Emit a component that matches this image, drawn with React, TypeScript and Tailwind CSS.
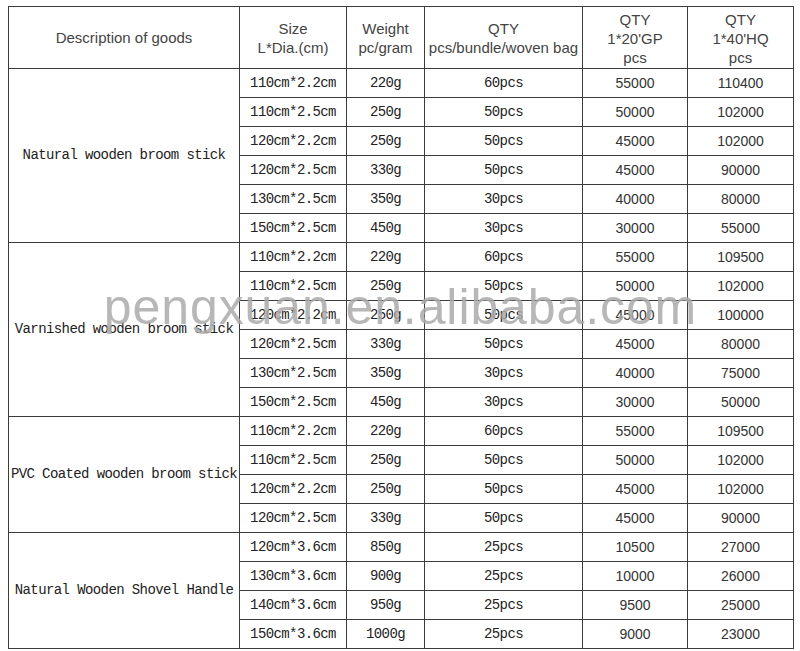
import React from 'react';

type Row = [string, string, string, string, string];

const groups: { name: string; rows: Row[] }[] = [
  {
    name: 'Natural wooden broom stick',
    rows: [
      ['110cm*2.2cm', '220g', '60pcs', '55000', '110400'],
      ['110cm*2.5cm', '250g', '50pcs', '50000', '102000'],
      ['120cm*2.2cm', '250g', '50pcs', '45000', '102000'],
      ['120cm*2.5cm', '330g', '50pcs', '45000', '90000'],
      ['130cm*2.5cm', '350g', '30pcs', '40000', '80000'],
      ['150cm*2.5cm', '450g', '30pcs', '30000', '55000'],
    ],
  },
  {
    name: 'Varnished wooden broom stick',
    rows: [
      ['110cm*2.2cm', '220g', '60pcs', '55000', '109500'],
      ['110cm*2.5cm', '250g', '50pcs', '50000', '102000'],
      ['120cm*2.2cm', '250g', '50pcs', '45000', '100000'],
      ['120cm*2.5cm', '330g', '50pcs', '45000', '80000'],
      ['130cm*2.5cm', '350g', '30pcs', '40000', '75000'],
      ['150cm*2.5cm', '450g', '30pcs', '30000', '50000'],
    ],
  },
  {
    name: 'PVC Coated wooden broom stick',
    rows: [
      ['110cm*2.2cm', '220g', '60pcs', '55000', '109500'],
      ['110cm*2.5cm', '250g', '50pcs', '50000', '102000'],
      ['120cm*2.2cm', '250g', '50pcs', '45000', '102000'],
      ['120cm*2.5cm', '330g', '50pcs', '45000', '90000'],
    ],
  },
  {
    name: 'Natural Wooden Shovel Handle',
    rows: [
      ['120cm*3.6cm', '850g', '25pcs', '10500', '27000'],
      ['130cm*3.6cm', '900g', '25pcs', '10000', '26000'],
      ['140cm*3.6cm', '950g', '25pcs', '9500', '25000'],
      ['150cm*3.6cm', '1000g', '25pcs', '9000', '23000'],
    ],
  },
];

// SimSun-ish monospace text vs. Arial-ish numbers, as in the source sheet
const mono = "font-['Liberation_Mono',monospace] text-[14px] tracking-[-0.6px] text-[#222]";
const sans = "font-['Liberation_Sans',Arial,sans-serif] text-[14px] text-[#333]";
const cell = 'border border-[#3c3c3c] p-0 text-center align-middle';

export default function App() {
  return (
    <div className="min-h-[651px] w-[800px] bg-white pl-[8px] pt-[6px]">
      <div className="relative w-[785px]">
        <table className="w-[785px] table-fixed border-collapse">
          <colgroup>
            <col className="w-[231px]" />
            <col className="w-[107px]" />
            <col className="w-[78px]" />
            <col className="w-[158px]" />
            <col className="w-[105px]" />
            <col className="w-[106px]" />
          </colgroup>
          <thead>
            <tr className="h-[62px] font-['Liberation_Sans',Arial,sans-serif] text-[15px] leading-[19px] text-[#444]">
              <th className={`${cell} font-normal`}>Description of goods</th>
              <th className={`${cell} font-normal`}>Size<br />L*Dia.(cm)</th>
              <th className={`${cell} font-normal`}>Weight<br />pc/gram</th>
              <th className={`${cell} font-normal`}>QTY<br />pcs/bundle/woven bag</th>
              <th className={`${cell} pt-[2px] font-normal`}>QTY<br />1*20'GP<br />pcs</th>
              <th className={`${cell} pt-[2px] font-normal`}>QTY<br />1*40'HQ<br />pcs</th>
            </tr>
          </thead>
          <tbody>
            {groups.map((g) =>
              g.rows.map((r, i) => (
                <tr key={g.name + i} className="h-[29px]">
                  {i === 0 && (
                    <td rowSpan={g.rows.length} className={`${cell} ${mono} whitespace-nowrap`}>
                      {g.name}
                    </td>
                  )}
                  <td className={`${cell} ${mono}`}>{r[0]}</td>
                  <td className={`${cell} ${mono}`}>{r[1]}</td>
                  <td className={`${cell} ${mono}`}>{r[2]}</td>
                  <td className={`${cell} ${sans}`}>{r[3]}</td>
                  <td className={`${cell} ${sans}`}>{r[4]}</td>
                </tr>
              ))
            )}
          </tbody>
        </table>
        {/* watermark over the table */}
        <div className="pointer-events-none absolute left-0 right-0 top-[276px] text-center font-['Liberation_Sans',Arial,sans-serif] text-[50px] leading-none tracking-[0.9px] text-[rgba(170,170,170,0.85)]">
          pengxuan.en.alibaba.com
        </div>
      </div>
    </div>
  );
}
